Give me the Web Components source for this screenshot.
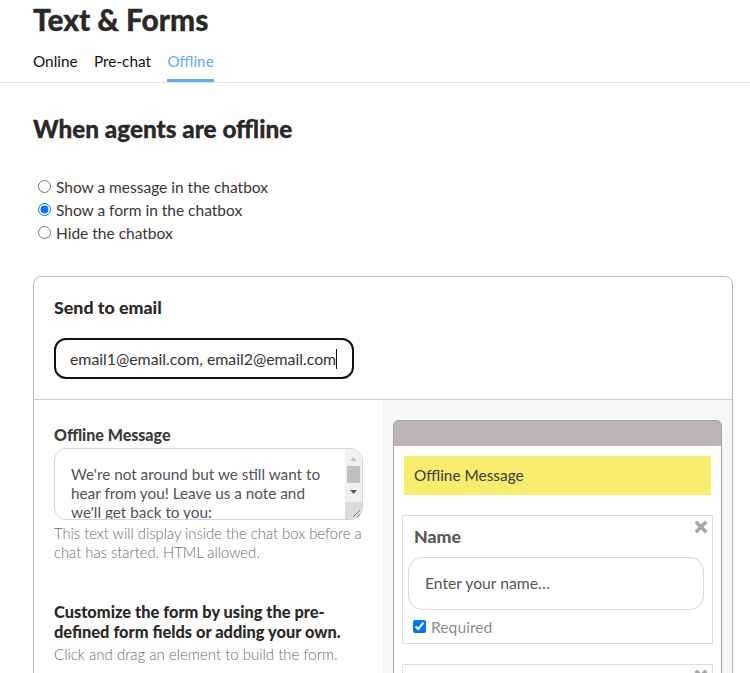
<!DOCTYPE html>
<html lang="en"><head><meta charset="utf-8"><title>Text &amp; Forms</title>
<style>
html,body{margin:0;padding:0;height:673px;overflow:hidden;background:#fff}
body{font-family:Lato,"Noto Sans",sans-serif;color:#2b2828}
</style></head><body>
<page-header heading="Text &amp; Forms"><tab-item>Online</tab-item><tab-item>Pre-chat</tab-item><tab-item active>Offline</tab-item></page-header>
<section-title>When agents are offline</section-title>
<radio-list>
  <radio-row>Show a message in the chatbox</radio-row>
  <radio-row checked>Show a form in the chatbox</radio-row>
  <radio-row>Hide the chatbox</radio-row>
</radio-list>
<settings-card>
  <email-section slot="top"></email-section>
  <offline-editor slot="left"></offline-editor>
  <chat-preview slot="right">
    <form-field label="Name" placeholder="Enter your name…"></form-field>
    <form-field></form-field>
  </chat-preview>
</settings-card>
<script>
function def(name, css, html, init){
  customElements.define(name, class extends HTMLElement{
    connectedCallback(){
      if(this.shadowRoot) return;
      const r=this.attachShadow({mode:'open'});
      r.innerHTML='<style>'+css+'</style>'+(typeof html==='function'?html(this):html);
      if(init) init(this,r);
    }
  });
}
def('page-header',
 `:host{display:block;border-bottom:1px solid #e6e0e0;height:82px;box-sizing:content-box}
  h1{margin:0;padding:0 0 0 33px;font-size:29.800px;line-height:40px;font-weight:900;color:#2b2828;-webkit-text-stroke:.3px #2b2828}
  nav{display:flex;gap:16.500px;padding:0 0 0 33px;margin-top:1px}`,
 el=>`<h1>${el.getAttribute('heading').replace('&','&amp;')}</h1><nav><slot></slot></nav>`);
def('tab-item',
 `:host{display:block;height:41px;box-sizing:border-box;font-size:15.300px;line-height:41px;color:#111}
  :host([active]){color:#66abeb;border-bottom:3px solid #66abeb}`,
 `<slot></slot>`);
def('section-title',
 `:host{display:block;padding:31px 0 0 33px;font-size:24.300px;line-height:30px;font-weight:900;color:#2b2828;-webkit-text-stroke:.3px #2b2828}`,
 `<slot></slot>`);
def('radio-list',
 `:host{display:flex;flex-direction:column;padding:31px 0 0 38px;gap:0}`,
 `<slot></slot>`);
def('radio-row',
 `:host{display:flex;align-items:center;height:23px;font-size:15.500px;color:#3a3636}
  input{margin:0 5px 0 0;width:13px;height:13px}`,
 el=>`<input type="radio" name="mode" ${el.hasAttribute('checked')?'checked':''}><slot></slot>`);
def('settings-card',
 `:host{display:block;margin:32px 17px 0 33px;border:1px solid #bdb8b8;border-radius:8px 8px 0 0;height:600px;overflow:hidden;background:#fff}
  .top{height:122px;border-bottom:1px solid #cfc9c9;box-sizing:content-box}
  .cols{display:grid;grid-template-columns:349px 1fr;height:100%}
  .r{background:#f7f7f7}`,
 `<div class="top"><slot name="top"></slot></div><div class="cols"><div><slot name="left"></slot></div><div class="r"><slot name="right"></slot></div></div>`);
def('email-section',
 `:host{display:block;padding:20px 0 0 20px}
  h3{margin:0;font-size:17.800px;line-height:20px;font-weight:900;color:#2b2828}
  .box{margin-top:21px;width:300px;height:41px;box-sizing:border-box;border:2px solid #111;border-radius:12px;padding:0 0 0 14px;font-size:15.850px;line-height:37px;color:#333;white-space:nowrap;display:flex}
  i{display:inline-block;width:1px;height:20px;background:#111;margin-top:9px}`,
 `<h3>Send to email</h3><div class="box"><span>email1@email.com, email2@email.com</span><i></i></div>`);
def('offline-editor',
 `:host{display:block;padding:25px 0 0 20px;width:329px;box-sizing:border-box}
  h4{margin:0;font-size:16px;line-height:20px;font-weight:900;color:#3d3a3a}
  .ta{position:relative;margin-top:3px;width:309px;height:72px;box-sizing:border-box;border:1px solid #d9d4d4;border-radius:12px;overflow:hidden;padding:16px 0 0 16px;font-size:15.300px;line-height:19px;color:#55505a}
  .ta p{margin:0;width:262px}
  .sb{position:absolute;right:0;top:0;bottom:0;width:17px;background:#f1f1f1}
  .sb svg{display:block;position:absolute;left:0;top:0}
  .hint{margin:4px 0 0;font-size:14.800px;line-height:19px;font-weight:300;color:#6f6b6b;width:315px}
  h5{margin:40px 0 0;font-size:16.400px;line-height:20px;font-weight:900;color:#2b2828;width:300px}
  .hint2{margin:3px 0 0;font-size:15px;line-height:19px;font-weight:300;color:#6f6b6b;white-space:nowrap}`,
 `<h4>Offline Message</h4>
  <div class="ta"><p>We're not around but we still want to hear from you! Leave us a note and we'll get back to you:</p>
   <div class="sb"><svg width="17" height="70" viewBox="0 0 17 70"><path d="M5 12L8.500 8L12 12Z" fill="#c4c4c4"/><rect x="2" y="17" width="13" height="17" fill="#c1c1c1"/><path d="M5 41L12 41L8.500 45Z" fill="#555"/><rect y="53" width="17" height="17" fill="#dcdcdc"/><path d="M8 68L15 61M12 68L15 65" stroke="#777" fill="none"/></svg></div></div>
  <p class="hint">This text will display inside the chat box before a chat has started. HTML allowed.</p>
  <h5>Customize the form by using the pre-defined form fields or adding your own.</h5>
  <p class="hint2">Click and drag an element to build the form.</p>`);
def('chat-preview',
 `:host{display:block;padding:20px 10px 0 10px}
  .panel{border:1px solid #a8a3a3;border-radius:5px 5px 0 0;background:#fff;height:500px;overflow:hidden}
  .bar{height:25px;background:#bdb5b5}
  .msg{margin:10px 10px 0 10px;height:39px;background:#f6ec6e;padding-left:10px;font-size:15.400px;line-height:39px;color:#3d3a3a}
  .fields{display:flex;flex-direction:column;gap:20px;padding:20px 8px 0 8px}`,
 `<div class="panel"><div class="bar"></div><div class="msg">Offline Message</div><div class="fields"><slot></slot></div></div>`);
def('form-field',
 `:host{display:block;position:relative;height:129px;box-sizing:border-box;border:1px solid #e2dddd;padding:0 8px 0 5px}
  .x{position:absolute;right:4px;top:4px;width:14px;height:14px}
  b{display:block;font-size:17.700px;font-weight:900;line-height:22px;padding:10px 0 0 6px;color:#5c5858}
  .in{margin-top:9px;height:53px;box-sizing:border-box;border:1px solid #dcd6d6;border-radius:14px;padding-left:16px;font-size:15.700px;line-height:51px;color:#555}
  label{display:flex;align-items:center;font-size:15.700px;color:#918d8d;margin-top:7px;padding-left:5px;height:19px}
  input{margin:0 5px 0 0;width:13px;height:13px}`,
 el=>`<svg class="x" viewBox="0 0 14 14"><path d="M1.800 1.800L12.200 12.200M12.200 1.800L1.800 12.200" stroke="#aaa5a5" stroke-width="3.600"/></svg>`+
   (el.hasAttribute('label')?`<b>${el.getAttribute('label')}</b><div class="in">${el.getAttribute('placeholder')}</div><label><input type="checkbox" checked>Required</label>`:''));
</script>
</body></html>
